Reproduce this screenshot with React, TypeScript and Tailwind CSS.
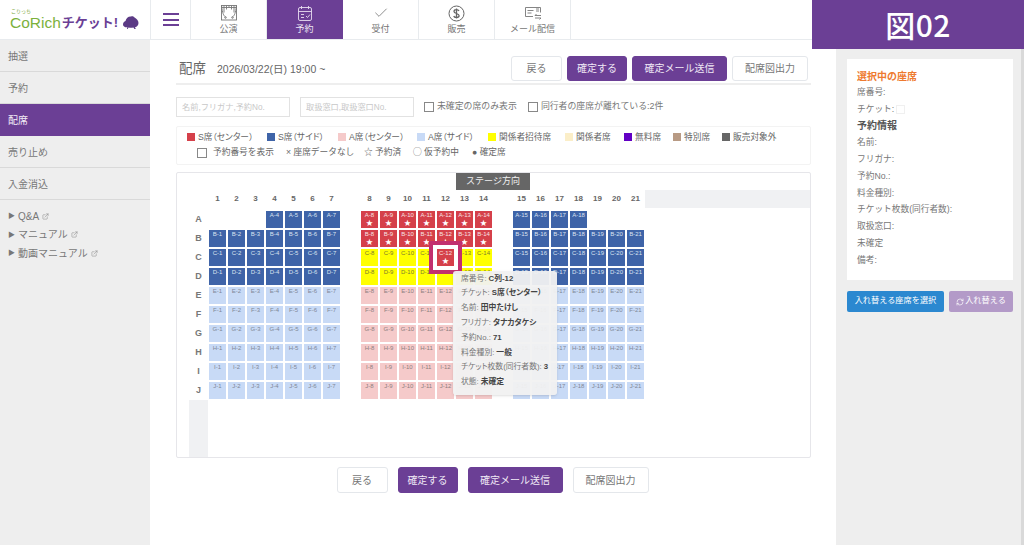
import { Check, ExternalLink, RefreshCw } from 'lucide-react';

const FONT = '[font-family:"Liberation_Sans","Noto_Sans_CJK_JP",sans-serif]';
const ROWS = ['A', 'B', 'C', 'D', 'E', 'F', 'G', 'H', 'I', 'J'];
const COLS = [1, 2, 3, 4, 5, 6, 7, 8, 9, 10, 11, 12, 13, 14, 15, 16, 17, 18, 19, 20, 21];

function seatClass(row: string, col: number) {
  const center = col >= 8 && col <= 14;
  if (center) {
    if (row === 'A' || row === 'B') return 'bg-[#d5404a] text-[#f7e3e4]';
    if (row === 'C' || row === 'D') return 'bg-[#ffff00] text-[#7b7b30]';
    return 'bg-[#f5caca] text-[#8d7f7f]';
  }
  if (row === 'A' || row === 'B' || row === 'C' || row === 'D') return 'bg-[#3f64a8] text-[#dbe3f1]';
  return 'bg-[#c8daf6] text-[#7f8896]';
}

function hasSeat(row: string, col: number) {
  if (row !== 'A') return true;
  return col >= 4 && col <= 18;
}

function Seat({ row, col }: { row: string; col: number }) {
  if (!hasSeat(row, col)) return <div className="h-[19px] w-[19px]" />;
  const sold = (row === 'A' || row === 'B') && col >= 8 && col <= 14;
  return (
    <div className="h-[19px] w-[19px] p-px">
      <div className={`flex h-full w-full flex-col items-center pt-[1px] text-[6px] leading-[7px] ${seatClass(row, col)}`}>
        <span>{row}-{col}</span>
        {sold && <span className="text-[7px] leading-[8px] text-white">★</span>}
      </div>
    </div>
  );
}

function SeatRow({ row }: { row: string }) {
  return (
    <div className="flex h-[19px] items-center">
      <div className="w-[19px] text-center text-[9px] font-bold text-[#777]">{row}</div>
      {COLS.map((c) => (
        <div key={c} className={c === 8 || c === 15 ? 'ml-[19px] flex' : 'flex'}>
          <Seat row={row} col={c} />
        </div>
      ))}
    </div>
  );
}

function Btn({ label, w, h, primary }: { label: string; w: string; h: string; primary?: boolean }) {
  return (
    <button
      className={`${w} ${h} rounded-[3px] border text-[10px] ${
        primary ? 'border-[#6b3f95] bg-[#6b3f95] text-[#f0e9f5]' : 'border-[#e4e7eb] bg-white text-[#777]'
      }`}
    >
      {label}
    </button>
  );
}

function Swatch({ color, label, className }: { color: string; label: string; className: string }) {
  return (
    <div className={`flex items-center ${className}`}>
      <span className={`mr-[3px] h-[8px] w-[8px] ${color}`} />
      <span>{label}</span>
    </div>
  );
}

function CurtainIcon() {
  return (
    <svg width="18" height="18" viewBox="0 0 18 18" fill="none" stroke="#777" strokeWidth="0.9">
      <rect x="1.5" y="1.5" width="15" height="14.5" />
      <path d="M1.5 3.5h15M1.5 1.5c1 8 2 10 4 11.5M16.5 1.5c-1 8-2 10-4 11.5M4 1.5v7M6.5 1.5v4M14 1.5v7M11.5 1.5v4M9 1.5v2" />
      <circle cx="5.5" cy="13.5" r="0.8" />
      <circle cx="12.5" cy="13.5" r="0.8" />
    </svg>
  );
}

function CalendarIcon() {
  return (
    <svg width="16" height="17" viewBox="0 0 16 17" fill="none" stroke="#e6dcef" strokeWidth="0.9">
      <rect x="1.5" y="2.5" width="13" height="13" rx="1.5" />
      <path d="M1.5 6.5h13M4.5 1v3M11.5 1v3M4 9.5h3M4 12.5h3M9 11l1.5 1.5L13 9.5" />
    </svg>
  );
}

function DollarIcon() {
  return (
    <svg width="17" height="17" viewBox="0 0 17 17" fill="none" stroke="#666" strokeWidth="1">
      <circle cx="8.5" cy="8.5" r="7.5" />
      <path strokeWidth="1.3" d="M11 6c-.5-1-1.3-1.4-2.5-1.4S6 5.200 6 6.400s1 1.600 2.500 2.100 2.600.9 2.600 2.200-1.100 1.800-2.600 1.800S6 12 5.800 11M8.500 3.400v10.200" />
    </svg>
  );
}

function MailIcon() {
  return (
    <svg width="18" height="16" viewBox="0 0 18 16" fill="none" stroke="#777" strokeWidth="0.9">
      <path d="M9 11.500H1.500v-9h15v5" />
      <path d="M3.500 5.500h6M3.500 8h4M12 4h3M12 6h3" />
      <path d="M17 10.500h-6l1.500-1.500M11 13h6l-1.500 1.500" />
    </svg>
  );
}

function NavTab({ label, icon, active }: { label: string; icon: React.ReactNode; active?: boolean }) {
  return (
    <div
      className={`flex h-full w-[76px] flex-col items-center border-r pt-[4px] text-[9px] leading-[12px] ${
        active ? 'border-[#6b3f95] bg-[#6b3f95] text-[#efe8f4]' : 'border-[#e8ebee] bg-white text-[#777]'
      }`}
    >
      <div className="flex h-[18px] items-center justify-center">{icon}</div>
      <div className="mt-[1px]">{label}</div>
    </div>
  );
}

function SideItem({ label, active }: { label: string; active?: boolean }) {
  return (
    <div
      className={`flex h-[32px] items-center border-b pl-[8px] pt-[1px] text-[10px] ${
        active ? 'border-[#6b3f95] bg-[#6b3f95] text-[#f3edf7]' : 'border-[#d9d9d9] text-[#777]'
      }`}
    >
      {label}
    </div>
  );
}

function SideLink({ label }: { label: string }) {
  return (
    <div className="flex h-[18.500px] items-center pl-[8px] text-[10px] text-[#777]">
      <span className="mr-[3px] text-[7px]">▶</span>
      {label}
      <ExternalLink size={7} className="ml-[3px]" strokeWidth={1.5} />
    </div>
  );
}

function Info({ label, children }: { label: string; children?: React.ReactNode }) {
  return (
    <div className="flex h-[16.800px] items-center text-[8.700px] text-[#777]">
      {label}
      {children}
    </div>
  );
}

function TooltipLine({ label, value }: { label: string; value: string }) {
  return (
    <div className="flex h-[14.800px] items-center whitespace-nowrap">
      <span>{label}:</span>
      <span className="ml-[2px] font-bold text-[#444]">{value}</span>
    </div>
  );
}

export default function App() {
  return (
    <div className={`relative flex h-[545px] w-[1024px] flex-col overflow-hidden bg-white ${FONT}`}>
      {/* header */}
      <header className="flex h-[40px] shrink-0 border-b border-[#e8ebee] bg-white">
        <div className="flex w-[150px] shrink-0 flex-col pl-[10px] pt-[9px]">
          <div className="ml-[1px] h-[5px] text-[5px] leading-[5px] text-[#7ba83c]">こりっち</div>
          <div className="mt-[1px] flex h-[15px] items-center whitespace-nowrap leading-[15px]">
            <span className="text-[15.500px] text-[#7bb13c]">CoRich</span>
            <span className="ml-[1px] text-[13px] font-bold text-[#6b3f95]">チケット!</span>
            <svg width="17" height="16" viewBox="0 0 17 16" className="ml-[4px]" fill="#5b3a85">
              <path d="M1 9.500c0-2 1.200-3 2.500-3.500.6-2.600 2.700-4.700 5.500-4.500 1.500-.8 3 0 3.500 1 2 .9 4 3 4 5.500 0 2.400-1.500 3.800-3.500 4.200l.8 1.800h-1.400l-1-1.600c-1.900.4-3 .4-4.900.1l-.8 1.500H4.900l.5-1.700C3 12.500 1 11.500 1 9.500z" />
            </svg>
          </div>
        </div>
        <div className="flex w-[41px] shrink-0 items-center justify-center border-x border-[#e8ebee]">
          <div className="flex w-[16px] flex-col gap-[3.500px]">
            <span className="h-[2px] bg-[#6b3f95]" />
            <span className="h-[2px] bg-[#6b3f95]" />
            <span className="h-[2px] bg-[#6b3f95]" />
          </div>
        </div>
        <NavTab label="公演" icon={<CurtainIcon />} />
        <NavTab label="予約" icon={<CalendarIcon />} active />
        <NavTab label="受付" icon={<Check size={16} strokeWidth={1} color="#555" />} />
        <NavTab label="販売" icon={<DollarIcon />} />
        <NavTab label="メール配信" icon={<MailIcon />} />
      </header>

      {/* figure label over the header */}
      <div className="absolute right-0 top-0 z-20 flex h-[49px] w-[212px] items-center justify-center bg-[#6b3f95] pb-[1px] font-['Noto_Sans_CJK_JP',sans-serif] text-[30px] font-medium tracking-[0.5px] text-white">
        図02
      </div>

      <div className="flex min-h-0 flex-1">
        {/* sidebar */}
        <aside className="w-[150px] shrink-0 bg-[#eeeeee]">
          <SideItem label="抽選" />
          <SideItem label="予約" />
          <SideItem label="配席" active />
          <SideItem label="売り止め" />
          <SideItem label="入金消込" />
          <div className="pt-[7px]">
            <SideLink label="Q&A" />
            <SideLink label="マニュアル" />
            <SideLink label="動画マニュアル" />
          </div>
        </aside>

        {/* main */}
        <main className="w-[686px] shrink-0 pl-[26px] pr-[25px] pt-[16px]">
          <div className="flex h-[29px] items-start border-b-2 border-[#eeeeee]">
            <div className="flex items-baseline pt-[3px] text-[#666]">
              <h1 className="ml-[3px] text-[13.500px] leading-[20px]">配席</h1>
              <span className="ml-[11px] text-[10.500px]">2026/03/22(日) 19:00 ~</span>
            </div>
            <div className="ml-auto mr-[3px] flex gap-[5px]">
              <Btn label="戻る" w="w-[51px]" h="h-[25px]" />
              <Btn label="確定する" w="w-[60px]" h="h-[25px]" primary />
              <Btn label="確定メール送信" w="w-[95px]" h="h-[25px]" primary />
              <Btn label="配席図出力" w="w-[76px]" h="h-[25px]" />
            </div>
          </div>

          <div className="mt-[12px] flex h-[20px] items-center">
            <input
              readOnly
              placeholder="名前,フリガナ,予約No."
              className="h-[20px] w-[114px] border border-[#e2e2e2] px-[5px] text-[8.200px] placeholder:text-[#c8c8c8]"
            />
            <input
              readOnly
              placeholder="取扱窓口,取扱窓口No."
              className="ml-[10px] h-[20px] w-[114px] border border-[#e2e2e2] px-[5px] text-[8.200px] placeholder:text-[#c8c8c8]"
            />
            <span className="ml-[10px] h-[10px] w-[10px] border border-[#888]" />
            <span className="ml-[3px] text-[8.900px] text-[#777]">未確定の席のみ表示</span>
            <span className="ml-[11px] h-[10px] w-[10px] border border-[#888]" />
            <span className="ml-[3px] text-[8.900px] text-[#777]">同行者の座席が離れている:2件</span>
          </div>

          <div className="mt-[9px] h-[39px] rounded-[2px] border border-[#f3f3f3] pl-[10px] pt-[3px] text-[8.700px] text-[#666]">
            <div className='flex h-[15px] items-center whitespace-nowrap [font-feature-settings:"palt"]'>
              <Swatch color="bg-[#d5404a]" label="S席（センター）" className="w-[80px]" />
              <Swatch color="bg-[#3f64a8]" label="S席（サイド）" className="w-[71px]" />
              <Swatch color="bg-[#f5caca]" label="A席（センター）" className="w-[79px]" />
              <Swatch color="bg-[#c8daf6]" label="A席（サイド）" className="w-[71px]" />
              <Swatch color="bg-[#ffff00]" label="関係者招待席" className="w-[77px]" />
              <Swatch color="bg-[#fbeec8]" label="関係者席" className="w-[59px]" />
              <Swatch color="bg-[#6200c4]" label="無料席" className="w-[49px]" />
              <Swatch color="bg-[#b89a84]" label="特別席" className="w-[49px]" />
              <Swatch color="bg-[#666666]" label="販売対象外" className="w-[60px]" />
            </div>
            <div className="flex h-[15px] items-center whitespace-nowrap pl-[10px]">
              <span className="h-[10px] w-[10px] border border-[#888]" />
              <span className="ml-[6px] w-[73px]">予約番号を表示</span>
              <span className="w-[78px]">× 座席データなし</span>
              <span className="w-[49px]">☆ 予約済</span>
              <span className="w-[59px]">◯ 仮予約中</span>
              <span>● 確定席</span>
            </div>
          </div>

          {/* seat map */}
          <div className="relative mt-[7px] h-[286px] rounded-[2px] border border-[#e6e6ea] pl-[12px]">
            <div className="absolute left-[279px] top-0 z-10 flex h-[17px] w-[74px] items-center justify-center bg-[#666] text-[9px] text-[#f0f0f0]">
              ステージ方向
            </div>
            <div className="mt-[17px] flex h-[18px] items-center">
              <div className="w-[19px]" />
              {COLS.map((c) => (
                <div
                  key={c}
                  className={`w-[19px] text-center text-[8px] font-bold text-[#666] ${c === 8 || c === 15 ? 'ml-[19px]' : ''}`}
                >
                  {c}
                </div>
              ))}
              <div className="h-[18px] flex-1 bg-[#f0f1f3]" />
            </div>
            <div className="mt-[2px]">
              {ROWS.map((r) => (
                <SeatRow key={r} row={r} />
              ))}
            </div>
            <div className="h-[57px] w-[19px] bg-[#f0f1f3]" />

            {/* selected seat marker */}
            <div className="absolute left-[252px] top-[68px] z-10 flex h-[33px] w-[33px] items-center justify-center border-[4px] border-[#c2306e] bg-white">
              <div className="flex h-[17px] w-[17px] flex-col items-center bg-[#d5404a] pt-[1px] text-[6px] leading-[7px] text-[#f7e3e4]">
                <span>C-12</span>
                <span className="text-[7px] leading-[8px] text-white">★</span>
              </div>
            </div>

            {/* seat tooltip */}
            <div className='absolute left-[276px] top-[98px] z-20 h-[124px] w-[104px] rounded-[3px] bg-[#f1f1f1]/95 pl-[8px] text-[7.800px] text-[#777] shadow-sm [font-feature-settings:"palt"]'>
              <TooltipLine label="席番号" value="C列-12" />
              <TooltipLine label="チケット" value="S席（センター）" />
              <TooltipLine label="名前" value="田中たけし" />
              <TooltipLine label="フリガナ" value="タナカタケシ" />
              <TooltipLine label="予約No." value="71" />
              <TooltipLine label="料金種別" value="一般" />
              <TooltipLine label="チケット枚数(同行者数)" value="3" />
              <TooltipLine label="状態" value="未確定" />
            </div>
          </div>

          <div className="mt-[9px] flex justify-center gap-[10px] pr-[2px]">
            <Btn label="戻る" w="w-[51px]" h="h-[26px]" />
            <Btn label="確定する" w="w-[60px]" h="h-[26px]" primary />
            <Btn label="確定メール送信" w="w-[95px]" h="h-[26px]" primary />
            <Btn label="配席図出力" w="w-[76px]" h="h-[26px]" />
          </div>
        </main>

        {/* right panel */}
        <aside className="flex w-[188px] shrink-0 bg-[#eeeeee]">
          <div className="w-[185px] pl-[11px] pt-[19px]">
            <div className="h-[221px] w-[166px] bg-white pl-[10px] pt-[9px]">
              <div className="flex h-[16px] items-center pt-[1px] text-[10px] font-bold text-[#ee7a2f]">選択中の座席</div>
              <Info label="席番号:" />
              <Info label="チケット:">
                <span className="ml-[2px] h-[9px] w-[9px] border border-[#f0f0f0]" />
              </Info>
              <div className="flex h-[16.800px] items-center text-[10px] font-bold text-[#555]">予約情報</div>
              <Info label="名前:" />
              <Info label="フリガナ:" />
              <Info label="予約No.:" />
              <Info label="料金種別:" />
              <Info label="チケット枚数(同行者数):" />
              <Info label="取扱窓口:" />
              <Info label="未確定" />
              <Info label="備考:" />
            </div>
            <div className="mt-[11px] flex gap-[5px]">
              <button className="h-[21px] w-[97px] rounded-[2px] bg-[#2b88d0] text-[8.200px] text-white">入れ替える座席を選択</button>
              <button className="flex h-[21px] w-[64px] items-center justify-center rounded-[2px] bg-[#b39ac8] text-[8.200px] text-white">
                <RefreshCw size={8} strokeWidth={2} className="mr-[1px]" />
                入れ替える
              </button>
            </div>
          </div>
          <div className="w-[3px] bg-[#d9d9d9]" />
        </aside>
      </div>
    </div>
  );
}
